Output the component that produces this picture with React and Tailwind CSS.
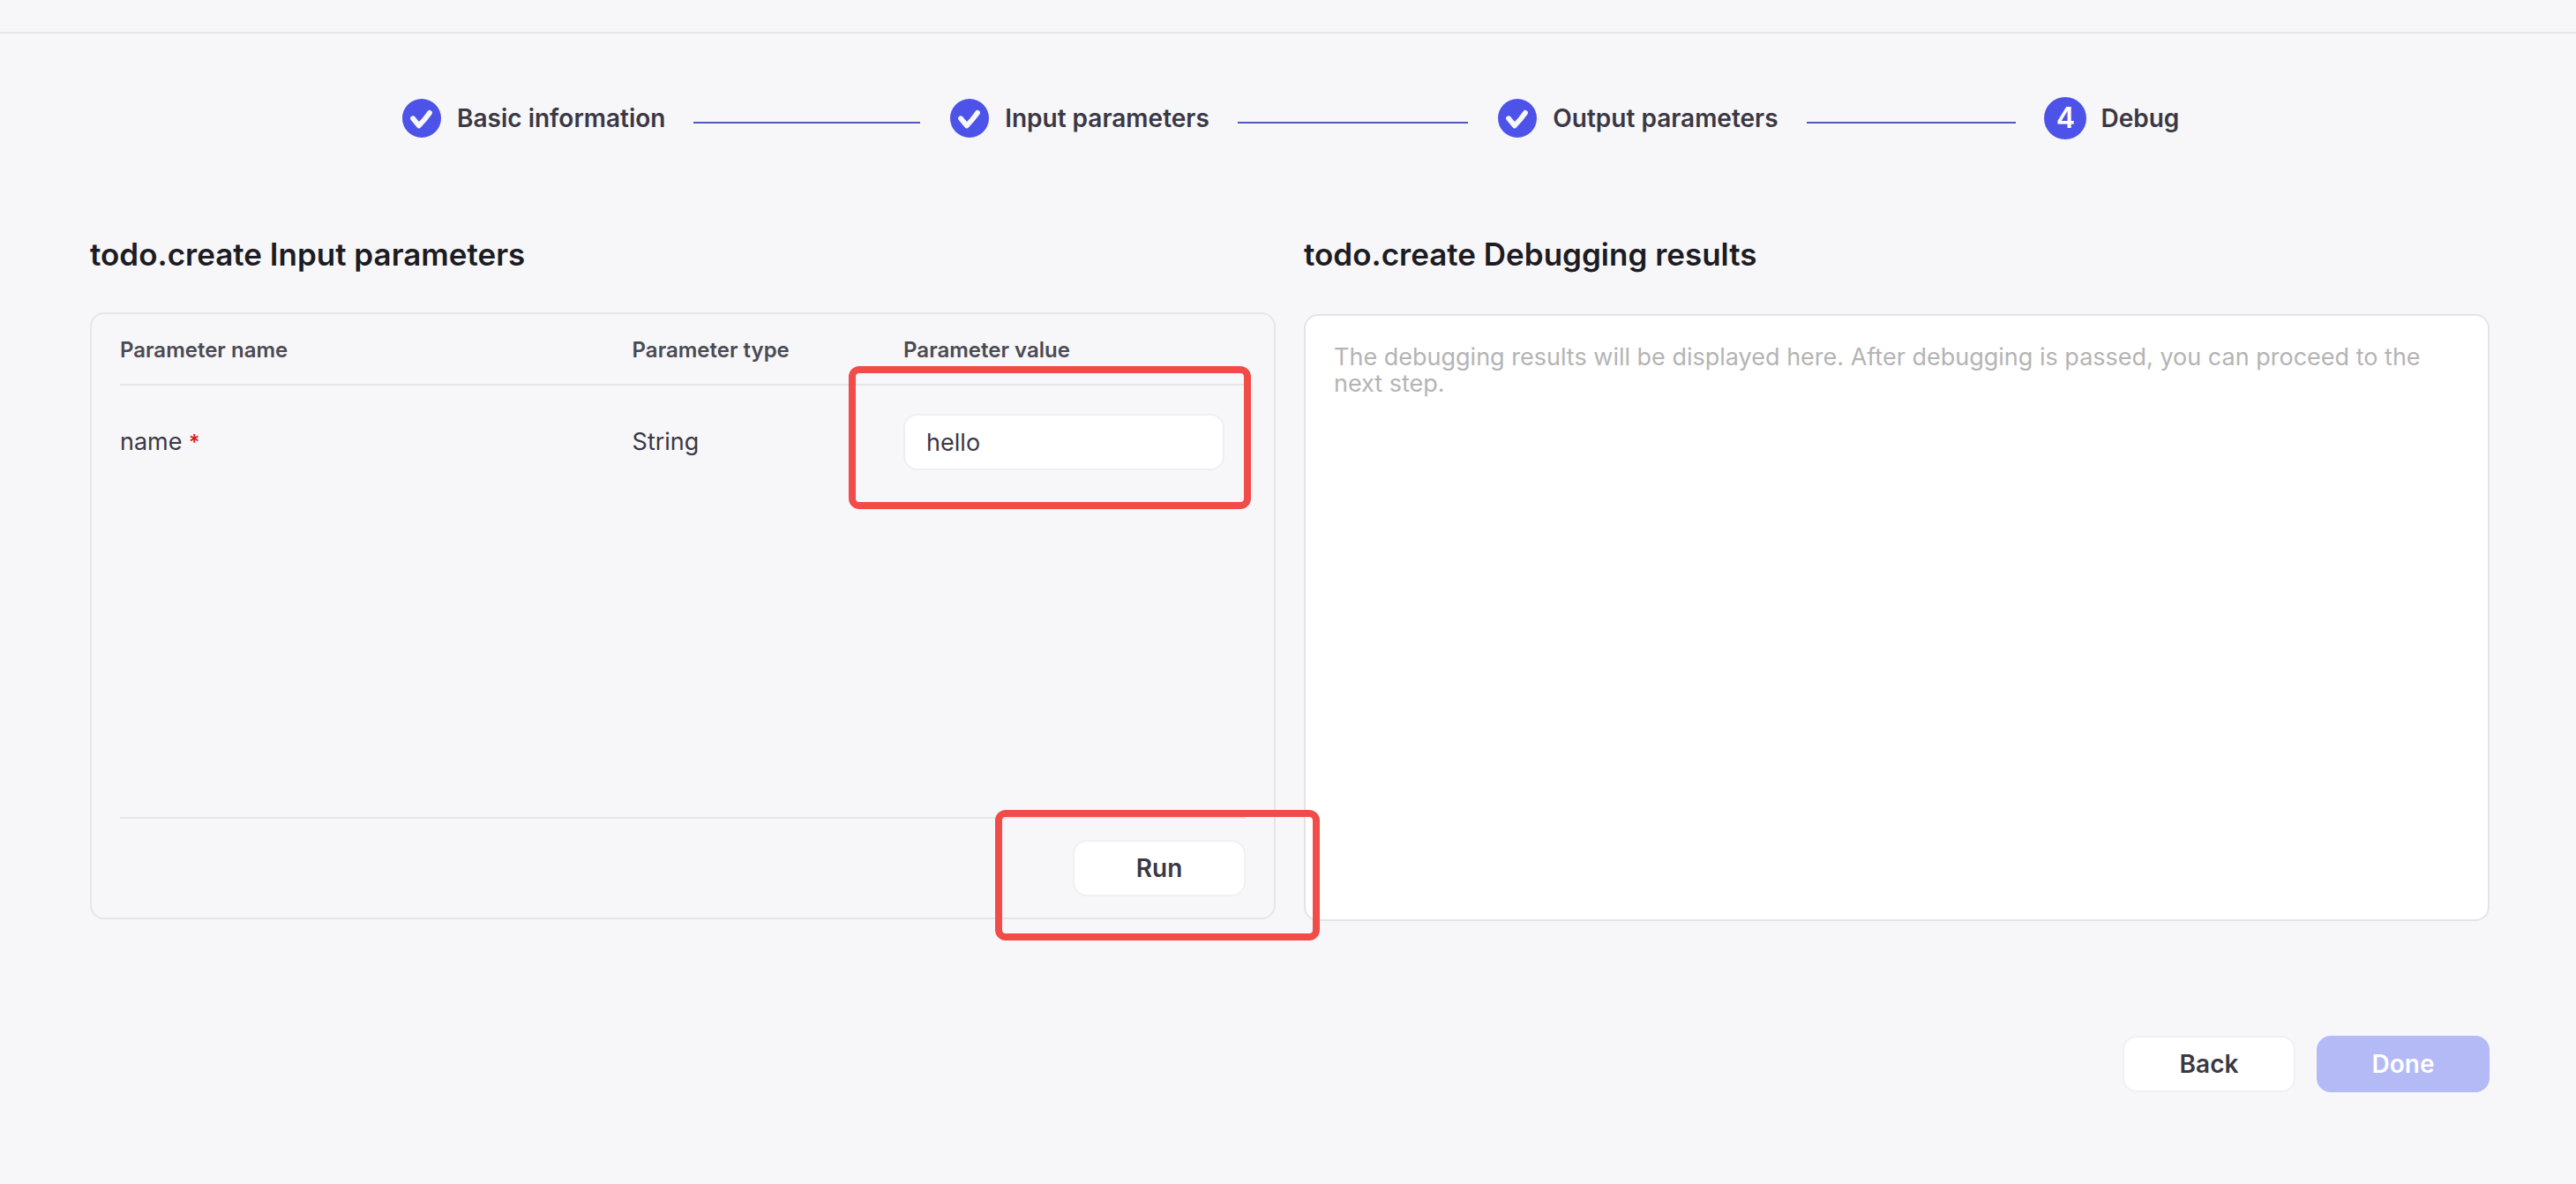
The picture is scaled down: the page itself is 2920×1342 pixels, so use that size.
import { useState } from "react";

const doneSteps = ["Basic information", "Input parameters", "Output parameters"];

function CheckBadge() {
  return (
    <svg viewBox="0 0 48 48" className="size-12 shrink-0" aria-hidden="true">
      <circle cx="24" cy="24" r="22" fill="#4d53e8" />
      <path
        d="M14 24.2 L20.8 32.4 Q27.5 25.8 33 17.8"
        fill="none"
        stroke="#f7f7fa"
        strokeWidth="5.8"
        strokeLinecap="round"
        strokeLinejoin="round"
      />
    </svg>
  );
}

function Stepper() {
  return (
    <ol className="flex items-center pr-[15.4%] pl-[15.55%] text-[28px] leading-12 font-semibold text-[#3b3844]">
      {doneSteps.map((label) => (
        <li key={label} className="flex flex-1 basis-0 items-center">
          <CheckBadge />
          <span className="ml-4 whitespace-nowrap">{label}</span>
          <span className="mx-8 mt-2.5 h-0.5 flex-1 bg-[#5258be]" />
        </li>
      ))}
      <li className="flex items-center">
        <span className="flex size-12 items-center justify-center rounded-full bg-[#4d53e8] text-[32px] text-white">
          4
        </span>
        <span className="ml-4">Debug</span>
      </li>
    </ol>
  );
}

const buttonBase = "h-16 w-49 rounded-2xl text-[28px] font-semibold";
const plainButton = "border-2 border-[#f0f0f5] bg-white text-[#3b3844]";

function Highlight({ className }) {
  return (
    <span
      aria-hidden="true"
      className={`pointer-events-none absolute z-10 rounded-xl border-8 border-[#f24c48] ${className}`}
    />
  );
}

export default function App() {
  const [value, setValue] = useState("hello");

  return (
    <div className="min-h-screen bg-[#f7f7fa] font-['Inter',sans-serif] text-[#3b3844]">
      <header className="h-[38px] border-b-2 border-[#e6e6e9]" />
      <main>
        <div className="pt-[72px]">
          <Stepper />
        </div>

        <div className="mt-27 grid grid-cols-2 gap-8 pr-[98px] pl-[102px]">
          <section>
            <h2 className="text-[35px] leading-11 font-semibold text-[#1d1c23]">
              todo.create Input parameters
            </h2>
            <div className="mt-11 rounded-2xl border-2 border-[#e6e6e9] px-8">
              <div className="min-h-[570px]">
                <table className="w-full table-fixed text-left">
                  <colgroup>
                    <col className="w-[45.5%]" />
                    <col className="w-[24.1%]" />
                    <col />
                  </colgroup>
                  <thead>
                    <tr className="h-20 border-b-2 border-[#e6e6e9] text-[24px] leading-8 text-[#4b4a52]">
                      <th className="pt-0.5 font-semibold">Parameter name</th>
                      <th className="pt-0.5 font-semibold">Parameter type</th>
                      <th className="pt-0.5 font-semibold">Parameter value</th>
                    </tr>
                  </thead>
                  <tbody>
                    <tr className="text-[27px]">
                      <td>
                        <label htmlFor="param-name">
                          name <span className="text-[24px] font-medium text-[#e0140c]">*</span>
                        </label>
                      </td>
                      <td>String</td>
                      <td className="pt-8 pr-6 pb-8">
                        <div className="relative">
                          <input
                            id="param-name"
                            value={value}
                            onChange={(e) => setValue(e.target.value)}
                            className="block h-16 w-full rounded-2xl border-2 border-[#efeff1] bg-white px-6 outline-none"
                          />
                          <Highlight className="-top-[54px] -right-[30px] -bottom-11 -left-[62px]" />
                        </div>
                      </td>
                    </tr>
                  </tbody>
                </table>
              </div>
              <div className="flex justify-end border-t-2 border-[#e6e6e9] py-6">
                <div className="relative">
                  <button type="button" className={`${buttonBase} ${plainButton} block`}>
                    Run
                  </button>
                  <Highlight className="-top-[34px] -right-[84px] -bottom-[50px] -left-[88px]" />
                </div>
              </div>
            </div>
          </section>

          <section className="flex flex-col">
            <h2
              id="results-title"
              className="text-[35px] leading-11 font-semibold text-[#1d1c23]"
            >
              todo.create Debugging results
            </h2>
            <textarea
              readOnly
              aria-labelledby="results-title"
              placeholder="The debugging results will be displayed here. After debugging is passed, you can proceed to the next step."
              className="mt-[46px] -mb-0.5 block w-full flex-1 resize-none rounded-2xl border-2 border-[#e4e4e5] bg-white px-8 py-8 text-[27px] leading-[30px] outline-none placeholder:text-[#b4b4b5]"
            />
          </section>
        </div>

        <div className="mt-33 flex justify-end gap-6 pr-[98px] pb-8">
          <button type="button" className={`${buttonBase} ${plainButton}`}>
            Back
          </button>
          <button type="button" disabled className={`${buttonBase} bg-[#b4baf6] text-white`}>
            Done
          </button>
        </div>
      </main>
    </div>
  );
}
